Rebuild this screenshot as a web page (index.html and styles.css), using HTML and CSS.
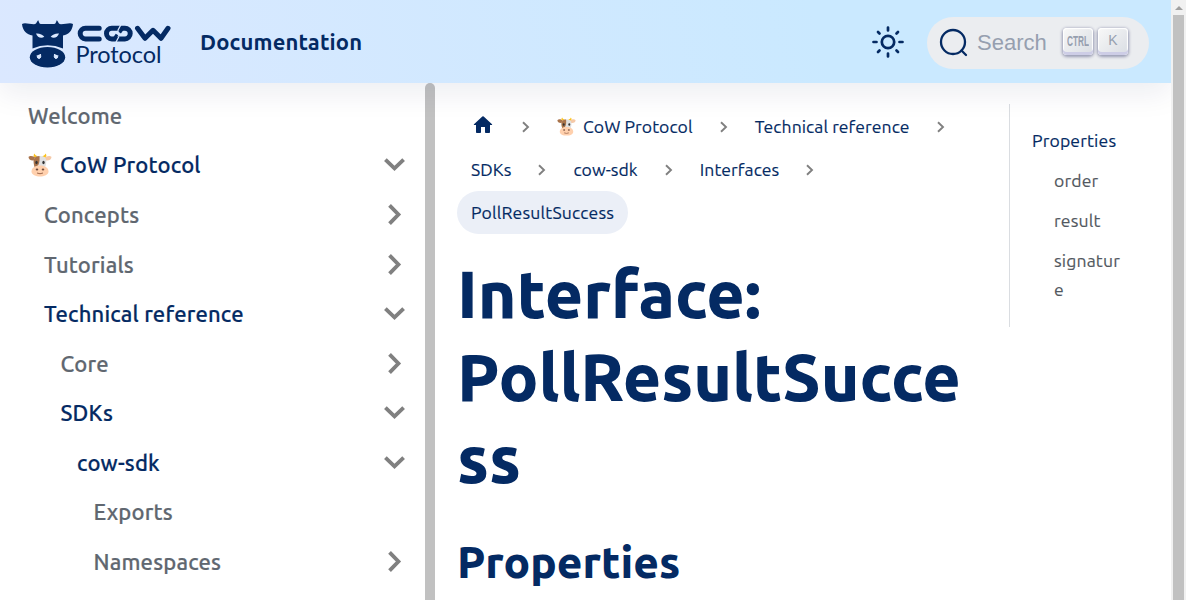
FILE: index.html
```html
<!DOCTYPE html>
<html lang="en">
<head>
<meta charset="utf-8">
<title>Interface: PollResultSuccess</title>
<link rel="stylesheet" href="styles.css">
</head>
<body>
<svg class="defs" aria-hidden="true">
  <symbol id="chev" viewBox="0 0 24 24"><path d="M3.900 7.600 12 15.500 20.100 7.600" fill="none" stroke="#808080" stroke-width="3.400"/></symbol>
  <symbol id="sep" viewBox="0 0 10 12"><path d="M2 1.200 7 6 2 10.800" fill="none" stroke="#808080" stroke-width="1.900"/></symbol>
  <symbol id="cow" viewBox="0 0 24 24">
    <path d="M6 7.500C2.500 8 .500 6 .500 4 2 2 6 3 8 5z" fill="#a9734b"/><path d="M18 7.500c3.500.500 5.500-1.500 5.500-3.500C22 2 18 3 16 5z" fill="#f5c9a8"/>
    <path d="M7 4.500C5 3.500 5.500 1.500 6.500.500c.500 2 2.500 2 3.500 3zM17 4.500c2-1 1.500-3 .500-4-.500 2-2.500 2-3.500 3z" fill="#fcc21b"/>
    <path d="M12 3C6.500 3 5 6 6 11l1.500 6h9L18 11c1-5-.500-8-6-8z" fill="#e0e0e0"/>
    <path d="M11.500 3C6.500 3 5 6 5.800 11l.700 3c4 0 5.500-4 5-11z" fill="#a9734b"/>
    <path d="M12 12.500c-5 0-8.500 2.500-8.500 6C3.500 22 8 23.500 12 23.500s8.500-1.500 8.500-5c0-3.500-3.500-6-8.500-6z" fill="#ffd0ad"/>
    <ellipse cx="8.500" cy="9.500" rx="1.200" ry="1.700" fill="#333"/><ellipse cx="15.500" cy="9.500" rx="1.200" ry="1.700" fill="#333"/>
    <ellipse cx="9" cy="16.500" rx="1.300" ry="1" fill="#714b3d"/><ellipse cx="15" cy="16.500" rx="1.300" ry="1" fill="#714b3d"/>
    <path d="M9 20q3 1.500 6 0" fill="none" stroke="#a06b50"/>
  </symbol>
</svg>
<div class="app">
<div class="page">
  <header class="navbar">
    <svg class="logo" viewBox="0 0 152 52" width="152" height="52">
      <g fill="#042a63">
        <path d="M0 4C3 2.300 7 4.200 12 4.200 15 4 14.300 1.500 16.300.200c.900 2 .700 3.600 2.700 3.800h13c2-.200 1.800-1.800 2.700-3.800 2 1.300 1.300 3.800 4.300 4 5 0 9-1.900 12-.200-.700 7-4.300 10.500-10 11.500v13q-15.500-6.500-30.500 0V15.500C4.800 14.500.700 11 0 4z"/>
        <ellipse cx="25.500" cy="37.300" rx="17.700" ry="10.200"/>
      </g>
      <path d="M14 13.600c3.500-.300 6.800 1 8.300 3.200-2.500 1.800-7 1.200-8.300-3.200zM37 13.600c-3.500-.300-6.800 1-8.300 3.200 2.500 1.800 7 1.200 8.300-3.200z" fill="#dbe9ff"/>
      <path d="M15 35.500q.300 3.500 2.500 3 2-.800 1-4.500M36 35.500q-.300 3.500-2.500 3-2-.800-1-4.500" fill="#dbe9ff" stroke="#dbe9ff"/>
      <g fill="none" stroke="#042a63" stroke-width="5" stroke-linecap="round" stroke-linejoin="round">
        <path d="M77.200 8.300H63.500a5.300 5.300 0 0 0 0 10.600h13.700"/>
        <rect x="84.500" y="8.300" width="23.700" height="10.600" rx="5.300"/>
        <path d="M92.500 18 95 14.500M100.200 9.200 97.700 12.700" stroke-width="3" stroke-linecap="butt"/>
        <path d="M93.800 22.500 97 16.500M95.700 10.700 98.900 4.700" stroke="#d9e8ff" stroke-width="1.300" stroke-linecap="butt"/>
        <path d="M115.500 8.300l7.500 10 8-8 8 8 7-10"/>
      </g>
      <text x="53.500" y="43" textLength="86" lengthAdjust="spacing" class="logo-text">Protocol</text>
    </svg>
    <a class="nav-link">Documentation</a>
    <svg class="sun" viewBox="0 0 34 34" width="34" height="34" fill="none" stroke="#042a63" stroke-width="2.700" stroke-linecap="round"><circle cx="17" cy="17" r="6.200"/><path d="M17 2.500v3M17 28.500v3M2.500 17h3M28.500 17h3M7 7l1.500 1.500M25.500 25.500 27 27M27 7l-1.500 1.500M8.500 25.500 7 27"/></svg>
    <div class="search">
      <svg viewBox="0 0 30 30" width="30" height="30" fill="none" stroke="#042a63" stroke-width="2.300" stroke-linecap="round"><circle cx="14" cy="14" r="12"/><path d="m22.500 22.500 4.500 4.500"/></svg>
      <span class="search-label">Search</span>
      <kbd><span class="ctrl">CTRL</span></kbd><kbd>K</kbd>
    </div>
  </header>
  <div class="columns">
    <nav class="sidebar">
      <ul class="menu">
        <li>Welcome</li>
        <li class="on"><svg class="emoji"><use href="#cow"/></svg>CoW Protocol<svg class="arrow"><use href="#chev"/></svg></li>
        <li class="l2">Concepts<svg class="arrow shut"><use href="#chev"/></svg></li>
        <li class="l2">Tutorials<svg class="arrow shut"><use href="#chev"/></svg></li>
        <li class="l2 on">Technical reference<svg class="arrow"><use href="#chev"/></svg></li>
        <li class="l3">Core<svg class="arrow shut"><use href="#chev"/></svg></li>
        <li class="l3 on">SDKs<svg class="arrow"><use href="#chev"/></svg></li>
        <li class="l4 on">cow-sdk<svg class="arrow"><use href="#chev"/></svg></li>
        <li class="l5">Exports</li>
        <li class="l5">Namespaces<svg class="arrow shut"><use href="#chev"/></svg></li>
      </ul>
      <div class="side-thumb"></div>
    </nav>
    <main class="content">
      <div class="crumbs">
        <a><svg class="home" viewBox="0 0 24 24"><path d="M10 19v-5h4v5c0 .550.450 1 1 1h3c.550 0 1-.450 1-1v-7h1.700c.460 0 .680-.570.330-.870L12.670 3.600a1 1 0 0 0-1.340 0l-8.360 7.530c-.340.300-.130.870.330.870H5v7c0 .550.450 1 1 1h3c.550 0 1-.450 1-1z" fill="#042a63"/></svg></a><svg class="sep"><use href="#sep"/></svg>
        <a><svg class="emoji-s"><use href="#cow"/></svg>CoW Protocol</a><svg class="sep"><use href="#sep"/></svg>
        <a>Technical reference</a><svg class="sep"><use href="#sep"/></svg>
      </div>
      <div class="crumbs">
        <a>SDKs</a><svg class="sep"><use href="#sep"/></svg>
        <a>cow-sdk</a><svg class="sep"><use href="#sep"/></svg>
        <a>Interfaces</a><svg class="sep"><use href="#sep"/></svg>
      </div>
      <div class="crumbs"><a class="pill">PollResultSuccess</a></div>
      <h1>Interface: PollResultSuccess</h1>
      <h2>Properties</h2>
    </main>
    <aside class="toc">
      <a class="top">Properties</a>
      <a>order</a>
      <a>result</a>
      <a>signature</a>
    </aside>
  </div>
</div>
<div class="scrollbar"><i></i><b></b></div>
</div>
</body>
</html>
```
FILE: styles.css
```css
* { box-sizing: border-box; }
body { margin: 0; overflow: hidden; background: #fff; color: #042a63; font-family: Ubuntu, "Noto Sans", sans-serif; font-size: 22px; }
.defs { position: absolute; width: 0; height: 0; }
.app { display: flex; height: 600px; overflow: hidden; }
.page { width: 1171px; height: 600px; overflow: hidden; }
.navbar { display: flex; align-items: center; height: 83px; padding: 2px 22px 0; background: linear-gradient(75deg, #dbe8ff 0%, #cae9ff 70%); box-shadow: 0 10px 30px rgba(7, 24, 80, .08); position: relative; z-index: 2; }
.logo { margin-top: 6px; flex: none; }
.logo-text { font: 400 23.500px Lato, sans-serif; fill: #042a63; }
.nav-link { margin: -3px 0 0 26px; font-weight: 700; letter-spacing: .15px; }
.sun { margin: -1px 0 0 auto; }
.search { display: flex; align-items: center; width: 222px; height: 52px; margin-left: 22px; padding-left: 12px; border-radius: 26px; background: #ebedf0; }
.search-label { flex: none; width: 85px; padding-left: 8px; margin-right: 9px; font: 22px "Liberation Sans", sans-serif; color: #969faf; }
kbd { display: flex; flex: none; justify-content: center; width: 30px; height: 27px; margin: -3px 5px 0 0; border-radius: 4px; background: linear-gradient(-45deg, #d9dde3, #f8f8f8); box-shadow: inset 0 -3px 0 #cdcde6, inset 0 0 1px 1px #fff, 0 1px 3px 1px rgba(30, 35, 90, .4); font: 14px/24px "Liberation Sans", sans-serif; color: #969faf; }
.ctrl { font-weight: 700; font-size: 15px; line-height: 25px; transform: scaleX(.55); }
.columns { display: flex; height: 517px; }
.sidebar { display: flex; width: 435px; flex: none; }
.menu { list-style: none; width: 425px; margin: 0; padding: 8px 17px 0 11px; }
.menu li { display: flex; align-items: center; height: 49.530px; padding: 0 0 0 17px; color: #606770; font-weight: 500; letter-spacing: .17px; -webkit-text-stroke: .2px; }
.menu .on { color: #042a63; padding-bottom: .700px; }
.menu .l2 { padding-left: 33px; }
.menu .l3 { padding-left: 49.500px; }
.menu .l4 { padding-left: 66px; }
.menu .l5 { padding-left: 82.500px; }
.arrow { width: 27px; height: 27px; margin-left: auto; }
.shut { transform: rotate(-90deg); }
.emoji { width: 24px; height: 24px; margin-right: 8px; }
.side-thumb { width: 10px; border-radius: 5px 5px 0 0; background: #c1c1c1; }
.content { width: 552px; padding: 22px 22px 0; flex: none; }
.crumbs { display: flex; height: 43px; font-size: 17.600px; letter-spacing: .05px; -webkit-text-stroke: .15px; }
.crumbs a { display: flex; align-items: center; padding: 0 14px 1px; }
.crumbs .pill { border-radius: 22px; background: #ebeff7; letter-spacing: .17px; }
.sep { width: 10px; height: 12px; margin: 16px 12px 0; }
.home { width: 24px; height: 24px; margin-bottom: 3px; }
.emoji-s { width: 19px; height: 19px; margin-right: 7px; }
h1 { margin: 18px 0 0; font-size: 66px; line-height: 82.500px; font-weight: 800; overflow-wrap: break-word; }
h2 { margin: 34px 0 0; font-size: 44px; line-height: 55px; font-weight: 800; }
.toc { width: 161px; height: 223px; margin: 21px 0 0 22px; padding: 22px 46px 0 22px; border-left: 1px solid #dadde1; font-size: 17.600px; line-height: 29px; letter-spacing: .15px; -webkit-text-stroke: .15px; color: #525860; }
.toc a { display: block; padding-left: 22px; margin-bottom: 11px; overflow-wrap: break-word; }
.toc .top { padding-left: 0; color: #042a63; }
.scrollbar { width: 15px; height: 600px; padding: 6px 2px 0; background: #f1f1f1; }
.scrollbar i { display: block; width: 0; margin: 0 auto; border: 4px solid transparent; border-top: 0; border-bottom-color: #a0a0a0; }
.scrollbar b { display: block; height: 590px; margin-top: 5px; background: #c1c1c1; }
```
